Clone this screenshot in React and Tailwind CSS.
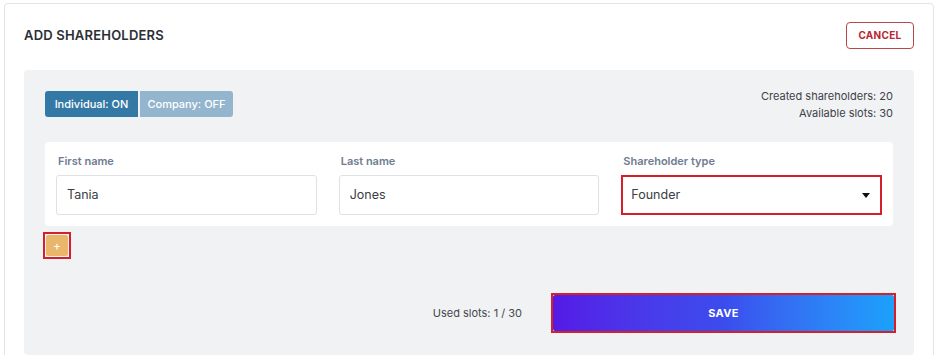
import { useState } from 'react';

const FIELDS = [
  { label: 'First name', value: 'Tania' },
  { label: 'Last name', value: 'Jones' },
];

export default function App() {
  const [individual, setIndividual] = useState(true);

  return (
    <div className="w-[939px] h-[355px] bg-white overflow-hidden pt-[3px] pl-[4px] pr-[5px]" style={{ fontFamily: 'Inter, "Open Sans", sans-serif' }}>
      <div className="h-[360px] border border-[#e1e3e6] rounded-[4px] bg-white px-[19px] pt-[18px]">
        {/* Header */}
        <div className="flex items-start justify-between">
          <h1 className="text-[13px] font-semibold tracking-[0.2px] text-[#2b2f36] mt-[4px]">ADD SHAREHOLDERS</h1>
          <button className="w-[68px] h-[27px] border border-[#b8474d] rounded-[4px] text-[10px] font-bold text-[#b8272f] tracking-[0.3px]">
            CANCEL
          </button>
        </div>

        {/* Panel */}
        <div className="mt-[21px] bg-[#f1f2f4] rounded-[4px] px-[21px] pt-[18px] pb-[22px]">
          <div className="flex items-start justify-between">
            <div className="flex gap-[2px] mt-[3px]">
              <button
                onClick={() => setIndividual(true)}
                className={`w-[93px] h-[26px] rounded-l-[3px] text-[11px] font-medium text-white ${individual ? 'bg-[#3479a6]' : 'bg-[#93b5ce]'}`}
              >
                Individual: ON
              </button>
              <button
                onClick={() => setIndividual(false)}
                className={`w-[93px] h-[26px] rounded-r-[3px] text-[11px] font-medium text-white ${individual ? 'bg-[#93b5ce]' : 'bg-[#3479a6]'}`}
              >
                Company: OFF
              </button>
            </div>
            <div className="text-right text-[11px] leading-[17px] text-[#3d4148]">
              <p>Created shareholders: 20</p>
              <p>Available slots: 30</p>
            </div>
          </div>

          {/* Row card */}
          <div className="mt-[20px] bg-white rounded-[4px] px-[11px] pt-[12px] pb-[11px] grid grid-cols-3 gap-x-[22px]">
            {FIELDS.map((f) => (
              <div key={f.label}>
                <p className="ml-[2px] text-[11px] font-semibold text-[#6f7c90] leading-[14px]">{f.label}</p>
                <div className="mt-[7px] h-[40px] border border-[#dfe1e5] rounded-[3px] flex items-center px-[10px] text-[12.5px] text-[#3a3d42]">
                  {f.value}
                </div>
              </div>
            ))}
            <div>
              <p className="ml-[2px] text-[11px] font-semibold text-[#6f7c90] leading-[14px]">Shareholder type</p>
              <div className="mt-[7px] h-[40px] border-2 border-[#d3202a] flex items-center justify-between px-[8px] text-[12.5px] text-[#3a3d42]">
                <span>Founder</span>
                <svg width="8" height="5" viewBox="0 0 8 5" className="mr-[2px]">
                  <path d="M0 0h8L4 5z" fill="#111" />
                </svg>
              </div>
            </div>
          </div>

          {/* Add button */}
          <div className="mt-[6px] -ml-[2px] w-[28px] h-[27px] border-2 border-[#d3202a] p-[1px]">
            <button className="w-full h-full bg-[#e9b66c] rounded-[2px] text-white text-[12px] leading-none flex items-center justify-center">+</button>
          </div>

          {/* Footer */}
          <div className="mt-[34px] flex items-center justify-end gap-[29px] -mr-[3px]">
            <span className="text-[11px] text-[#44484f]">Used slots: 1 / 30</span>
            <div className="w-[345px] h-[40px] border-2 border-[#d3202a]">
              <button className="w-full h-full rounded-[2px] bg-gradient-to-r from-[#5419e6] via-[#3b4ced] to-[#1aa1fb] text-white text-[11px] font-bold tracking-[0.3px]">
                SAVE
              </button>
            </div>
          </div>
        </div>
      </div>
    </div>
  );
}
